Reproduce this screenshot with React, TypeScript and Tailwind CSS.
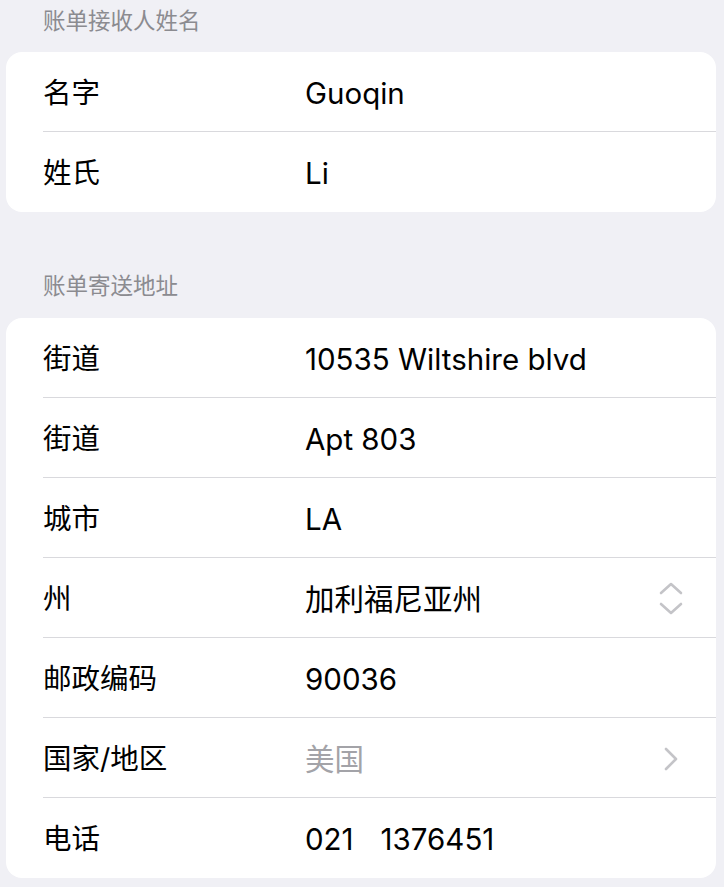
import React from "react";

const FONT = { fontFamily: 'Inter, "Noto Sans CJK SC", sans-serif' };

function Row({ label, value, last, muted, icon }: { label: string; value: React.ReactNode; last?: boolean; muted?: boolean; icon?: React.ReactNode }) {
  return (
    <div className="flex h-[80px] pl-[37px]">
      <div className={`flex flex-1 items-center pr-[30px] pt-[3px] ${last ? "" : "border-b border-[#d9d9dd]"}`}>
        <div className="w-[262px] text-[28.5px] text-black">{label}</div>
        <div className={`flex-1 text-[29.5px] whitespace-pre ${muted ? "text-[#a3a3a8]" : "text-black"}`}>{value}</div>
        {icon}
      </div>
    </div>
  );
}

const UpDown = (
  <svg width="26" height="38" viewBox="0 0 26 38" fill="none" stroke="#c4c4c8" strokeWidth="2.6" strokeLinecap="round" strokeLinejoin="round" className="mr-[2px]">
    <path d="M3 13 L13 4 L23 13" />
    <path d="M3 24 L13 33 L23 24" />
  </svg>
);

const Right = (
  <svg width="16" height="26" viewBox="0 0 16 26" fill="none" stroke="#c4c4c8" strokeWidth="2.6" strokeLinecap="round" strokeLinejoin="round" className="mr-[7px]">
    <path d="M3 3 L13 13 L3 23" />
  </svg>
);

export default function App() {
  return (
    <div className="w-[724px] h-[887px] bg-[#f0f0f5] overflow-hidden" style={FONT}>
      <div className="pl-[43px] pt-[4px] h-[52px] text-[22.5px] text-[#8b8b90]">账单接收人姓名</div>
      <div className="mx-[6px] mr-[8px] rounded-[16px] bg-white overflow-hidden">
        <Row label="名字" value="Guoqin" />
        <Row label="姓氏" value="Li" last />
      </div>
      <div className="pl-[43px] pt-[57px] h-[106px] text-[22.5px] text-[#8b8b90]">账单寄送地址</div>
      <div className="mx-[6px] mr-[8px] rounded-[16px] bg-white overflow-hidden">
        <Row label="街道" value="10535 Wiltshire blvd" />
        <Row label="街道" value="Apt 803" />
        <Row label="城市" value="LA" />
        <Row label="州" value="加利福尼亚州" icon={UpDown} />
        <Row label="邮政编码" value="90036" />
        <Row label="国家/地区" value="美国" muted icon={Right} />
        <Row
          label="电话"
          value={
            <span className="flex gap-[27px]">
              <span>021</span>
              <span>1376451</span>
            </span>
          }
          last
        />
      </div>
    </div>
  );
}
